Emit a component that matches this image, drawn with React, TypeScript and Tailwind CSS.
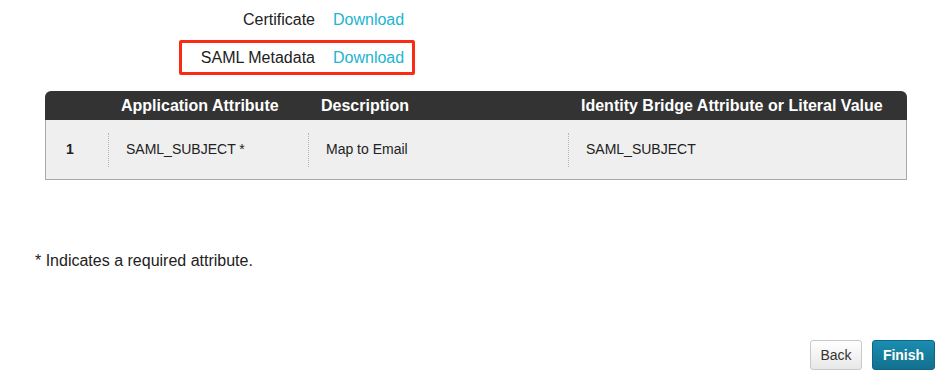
import React from "react";

const font = { fontFamily: '"Liberation Sans", Arial, sans-serif' };

function Sep() {
  return <div className="h-[34px] border-l border-dotted border-[#b5b5b5]" />;
}

export default function App() {
  return (
    <div className="w-[950px] h-[392px] bg-white text-[#222] flex flex-col" style={font}>
      <div className="flex flex-col gap-[3px] pt-[2px] pl-[179px]">
        <div className="flex items-center h-[35px] border-[3px] border-transparent self-start pr-[8px]">
          <div className="w-[133px] text-right text-[16px]">Certificate</div>
          <a className="ml-[18px] text-[16px] text-[#22b4d0] cursor-pointer">Download</a>
        </div>
        <div className="flex items-center h-[35px] border-[3px] border-[#f92b14] rounded-[2px] self-start pr-[8px]">
          <div className="w-[133px] text-right text-[16px]">SAML Metadata</div>
          <a className="ml-[18px] text-[16px] text-[#22b4d0] cursor-pointer">Download</a>
        </div>
      </div>

      <div className="ml-[45px] mt-[16px] w-[862px]">
        <div className="flex h-[29px] items-center bg-[#333333] rounded-t-[6px] text-white font-bold text-[16px]">
          <div className="w-[63px]" />
          <div className="w-[200px] pl-[13px]">Application Attribute</div>
          <div className="w-[260px] pl-[13px]">Description</div>
          <div className="flex-1 pl-[13px]">Identity Bridge Attribute or Literal Value</div>
        </div>
        <div className="flex h-[60px] items-center bg-[#efefef] border border-t-0 border-[#a9a9a9] text-[14px]">
          <div className="w-[62px] pl-[20px] font-bold">1</div>
          <Sep />
          <div className="w-[199px] pl-[17px]">SAML_SUBJECT *</div>
          <Sep />
          <div className="w-[259px] pl-[17px]">Map to Email</div>
          <Sep />
          <div className="flex-1 pl-[17px]">SAML_SUBJECT</div>
        </div>
      </div>

      <div className="ml-[35px] mt-[71px] text-[16px] leading-[20px]">* Indicates a required attribute.</div>

      <div className="mt-auto mb-[22px] mr-[15px] flex justify-end gap-[10px]">
        <button className="h-[30px] w-[52px] rounded-[3px] border border-[#c8c8c8] bg-gradient-to-b from-[#ffffff] to-[#e8e8e8] text-[14px] text-[#333]">
          Back
        </button>
        <button className="h-[30px] w-[63px] rounded-[3px] border border-[#0f6583] bg-gradient-to-b from-[#1a8db0] to-[#13708f] text-[14px] font-bold text-white">
          Finish
        </button>
      </div>
    </div>
  );
}
